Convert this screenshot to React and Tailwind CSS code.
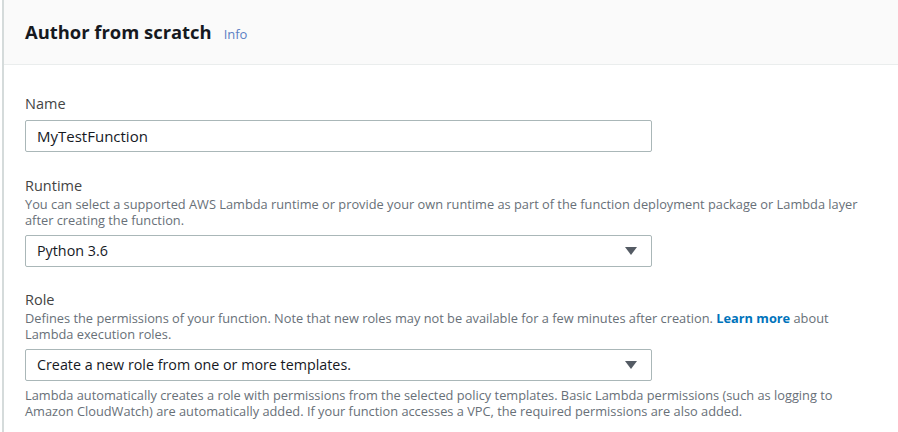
import React from "react";

const Caret = () => (
  <svg width="12" height="8" viewBox="0 0 12 8" className="shrink-0">
    <path d="M0 0 H12 L6 8 Z" fill="#545b64" />
  </svg>
);

const SelectBox = ({ value }) => (
  <div className="flex h-[32px] w-[627px] items-center justify-between rounded-[2px] border border-[#aab7b8] bg-white pl-[11px] pr-[14px] text-[14.3px] text-[#16191f]">
    <span>{value}</span>
    <Caret />
  </div>
);

const Field = ({ label, description, children }) => (
  <div className="flex flex-col">
    <div className="text-[14.5px] leading-[20px] text-[#444]">{label}</div>
    {description && (
      <div className="text-[12.8px] leading-[16px] text-[#687078]">{description}</div>
    )}
    <div className={description ? "mt-[7px]" : "mt-[6px]"}>{children}</div>
  </div>
);

export default function App() {
  return (
    <div
      className="h-[432px] w-[898px] overflow-hidden bg-white pl-[2px]"
      style={{ fontFamily: '"Open Sans", "Noto Sans", sans-serif' }}
    >
      <div className="h-full border-l-2 border-[#d5dbdb]">
        <div className="flex h-[65px] items-baseline gap-[12px] border-b border-[#eaeded] bg-[#fafafa] pl-[21px] pt-[18px]">
          <h2 className="text-[18.4px] font-bold leading-[28px] text-[#16191f]">
            Author from scratch
          </h2>
          <span className="text-[13px] text-[#5b7fc4]">Info</span>
        </div>

        <div className="flex flex-col pl-[21px] pt-[29px]">
          <Field label="Name">
            <div className="flex h-[32px] w-[627px] items-center rounded-[2px] border border-[#aab7b8] bg-white pl-[11px] text-[15px] text-[#16191f]">
              MyTestFunction
            </div>
          </Field>

          <div className="mt-[24px]">
            <Field
              label="Runtime"
              description={
                <>
                  You can select a supported AWS Lambda runtime or provide your own runtime as
                  part of the function deployment package or Lambda layer
                  <br />
                  after creating the function.
                </>
              }
            >
              <SelectBox value="Python 3.6" />
            </Field>
          </div>

          <div className="mt-[23px]">
            <Field
              label="Role"
              description={
                <>
                  Defines the permissions of your function. Note that new roles may not be
                  available for a few minutes after creation.{" "}
                  <a className="font-bold text-[#0073bb]">Learn more</a> about
                  <br />
                  Lambda execution roles.
                </>
              }
            >
              <SelectBox value="Create a new role from one or more templates." />
              <div className="mt-[6px] text-[12.8px] leading-[16px] text-[#687078]">
                Lambda automatically creates a role with permissions from the selected policy
                templates. Basic Lambda permissions (such as logging to
                <br />
                Amazon CloudWatch) are automatically added. If your function accesses a VPC,
                the required permissions are also added.
              </div>
            </Field>
          </div>
        </div>
      </div>
    </div>
  );
}
